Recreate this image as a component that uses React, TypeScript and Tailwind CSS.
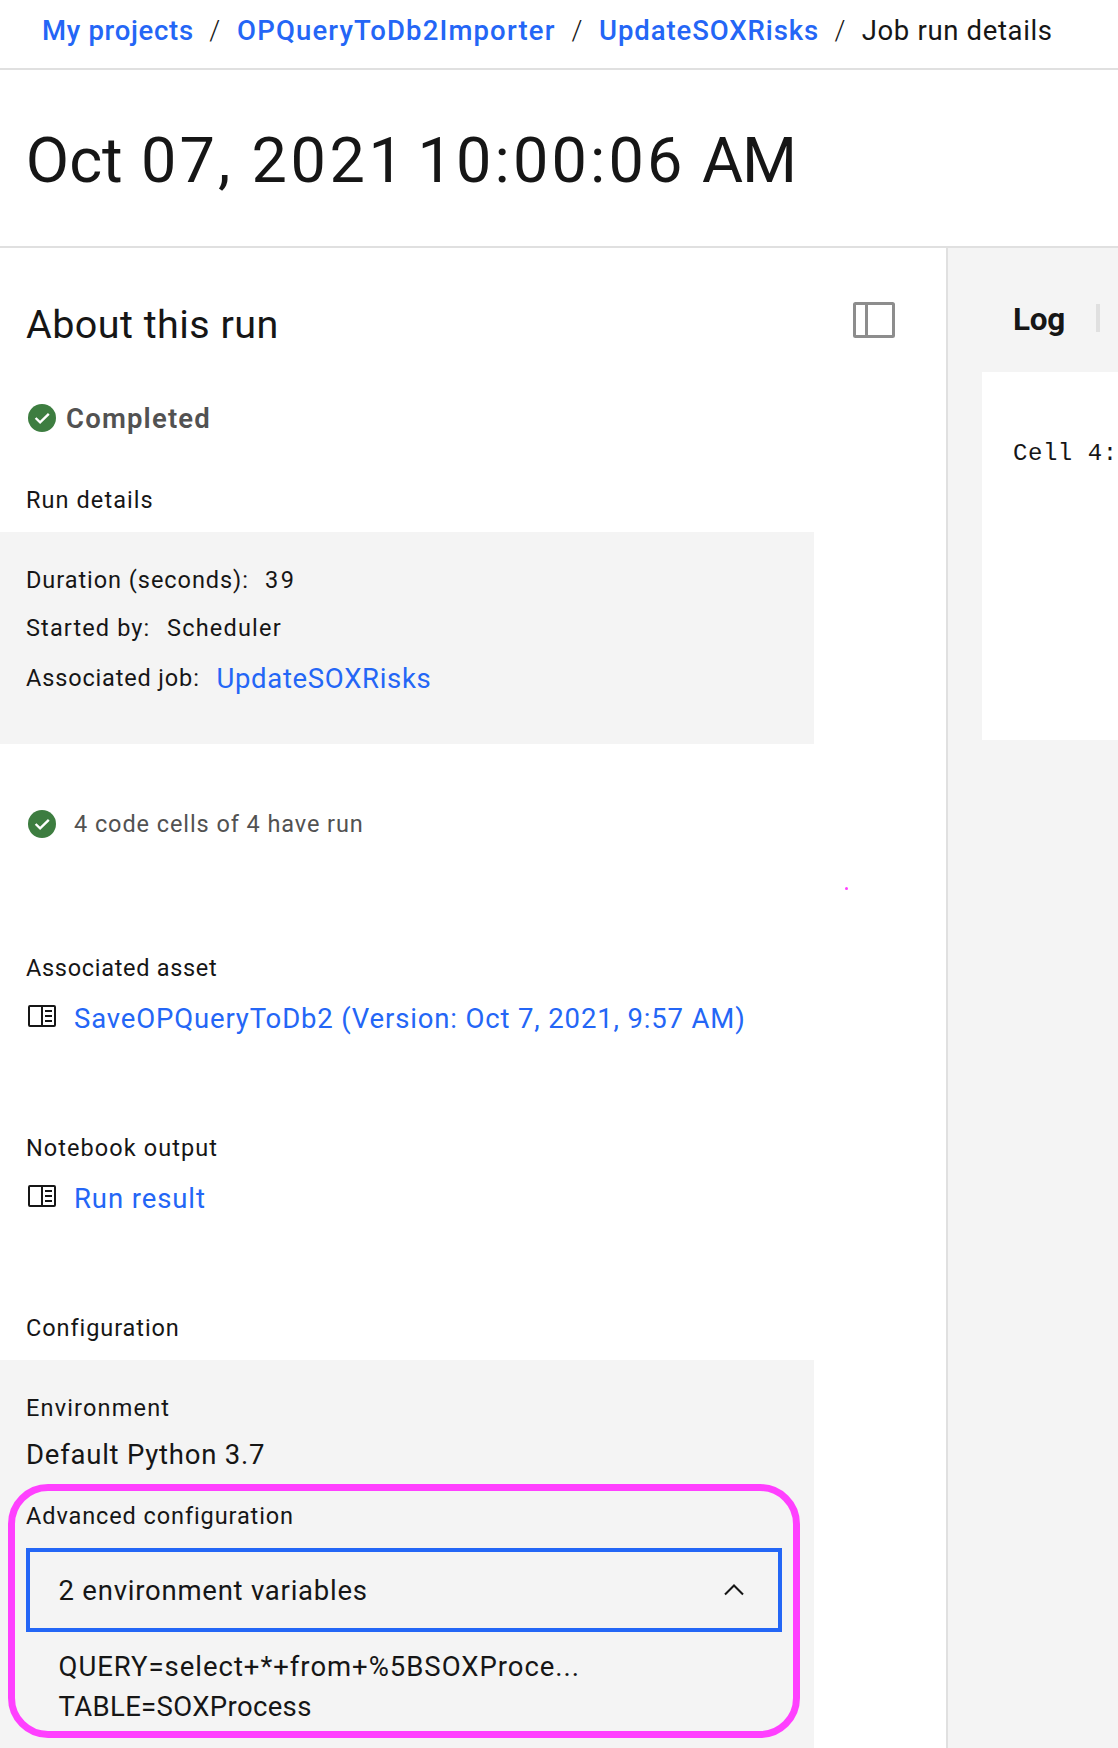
function CheckFilled({ className = '' }: { className?: string }) {
  return (
    <svg className={`h-7 w-7 shrink-0 ${className}`} viewBox="0 0 28 28" fill="none">
      <circle cx="14" cy="14" r="14" fill="#3d7d40" />
      <path d="M7.6 14 12.1 18.3 20.8 9.8" stroke="#fff" strokeWidth="2.4" />
    </svg>
  );
}

function NotebookIcon() {
  return (
    <svg className="mt-1 h-[22px] w-7 shrink-0" viewBox="0 0 28 22" fill="none" stroke="#161616" strokeWidth="2">
      <rect x="1" y="1" width="26" height="20" rx="1" />
      <path d="M14 1V21M17 6H24M17 11H24M17 16H24" />
    </svg>
  );
}

function PanelIcon() {
  return (
    <svg className="mt-[2px] h-9 w-[42px] shrink-0" viewBox="0 0 42 36" fill="none" stroke="#8d8d8d" strokeWidth="3">
      <rect x="1.5" y="1.5" width="39" height="33" rx="1" />
      <path d="M13.5 1.5V34.5" />
    </svg>
  );
}

const label = 'text-[23.5px] leading-8 whitespace-nowrap';
const body = 'text-[27.5px] leading-9 whitespace-nowrap';

export default function App() {
  return (
    <div className="flex h-[1748px] w-[1118px] flex-col overflow-hidden bg-white font-['Roboto',sans-serif] text-[#161616]">
      <nav className="h-[70px] shrink-0 border-b-2 border-[#e0e0e0] pt-[13px] pl-[42px]">
        <ol className={`flex ${body}`}>
          <li className="w-[167.3px] font-medium tracking-[0.7px] text-[#2466f6]">My projects</li>
          <li className="w-[27.8px] font-light">/</li>
          <li className="w-[334.5px] font-medium tracking-[1.16px] text-[#2466f6]">OPQueryToDb2Importer</li>
          <li className="w-[27.5px] font-light">/</li>
          <li className="w-[235.5px] font-medium tracking-[0.91px] text-[#2466f6]">UpdateSOXRisks</li>
          <li className="w-[27.1px] font-light">/</li>
          <li className="tracking-[0.65px]">Job run details</li>
        </ol>
      </nav>

      <header className="h-[178px] shrink-0 border-b-2 border-[#e0e0e0] pt-[51px] pl-[25.8px]">
        <h1 className="flex text-[63px] leading-[80px] whitespace-nowrap">
          <span className="w-[115.2px]">Oct</span>
          <span className="w-[110.5px] tracking-[3.1px]">07,</span>
          <span className="w-[166px] tracking-[3.6px]">2021</span>
          <span className="w-[284.5px] tracking-[3.15px]">10:00:06</span>
          <span className="tracking-[-1px]">AM</span>
        </h1>
      </header>

      <div className="flex min-h-0 flex-1">
        <main className="relative w-[948px] shrink-0 border-r-2 border-[#e0e0e0] pt-[52px]">
          <div className="flex h-12 justify-between pr-[51px] pl-[26px]">
            <h2 className="pt-px text-[39.5px] leading-[48px] tracking-[0.45px]">About this run</h2>
            <PanelIcon />
          </div>

          <div className={`mt-[53px] flex pl-7 font-semibold text-[#525252] ${body}`}>
            <CheckFilled className="mt-[3px]" />
            <span className="ml-[10px] tracking-[1.18px]">Completed</span>
          </div>

          <h3 className={`mt-[47px] pl-[26px] tracking-[1.07px] ${label}`}>Run details</h3>
          <dl className={`mt-4 h-[212px] w-[814px] bg-[#f4f4f4] pt-8 pl-[26px] ${label}`}>
            <div className="flex">
              <dt className="w-[239px] tracking-[0.95px]">Duration (seconds):</dt>
              <dd className="tracking-[2.6px]">39</dd>
            </div>
            <div className="mt-4 flex">
              <dt className="w-[141px] tracking-[1.12px]">Started by:</dt>
              <dd className="tracking-[1.2px]">Scheduler</dd>
            </div>
            <div className="mt-[18px] flex">
              <dt className="w-[190.5px] tracking-[0.85px]">Associated job:</dt>
              <dd className="text-[27.5px] leading-[34px] tracking-[0.67px] text-[#2466f6]">UpdateSOXRisks</dd>
            </div>
          </dl>

          <div className={`mt-16 flex items-center pl-7 text-[#525252] ${label}`}>
            <CheckFilled />
            <span className="ml-[18px] tracking-[0.92px]">4 code cells of 4 have run</span>
          </div>

          <h3 className={`mt-28 pl-[26px] tracking-[0.7px] ${label}`}>Associated asset</h3>
          <div className={`mt-[17px] flex pl-7 text-[#2466f6] ${body}`}>
            <NotebookIcon />
            <span className="ml-[18px] tracking-[0.85px]">SaveOPQueryToDb2 (Version: Oct 7, 2021, 9:57 AM)</span>
          </div>

          <h3 className={`mt-[95px] pl-[26px] tracking-[1.07px] ${label}`}>Notebook output</h3>
          <div className={`mt-[17px] flex pl-7 text-[#2466f6] ${body}`}>
            <NotebookIcon />
            <span className="ml-[18px] tracking-[0.9px]">Run result</span>
          </div>

          <h3 className={`mt-[95px] pl-[26px] tracking-[0.92px] ${label}`}>Configuration</h3>
          <section className="mt-4 h-[388px] w-[814px] bg-[#f4f4f4] pt-8 pl-[26px]">
            <p className={`tracking-[1.17px] ${label}`}>Environment</p>
            <p className={`mt-[13px] tracking-[0.77px] ${body}`}>Default Python 3.7</p>
            <p className={`mt-[27px] tracking-[0.9px] ${label}`}>Advanced configuration</p>
            <button className="mt-4 flex h-[84px] w-[756px] items-center justify-between border-4 border-[#2466f6] pr-[34px] pl-[28.5px]">
              <span className={`pt-[2px] tracking-[0.77px] ${body}`}>2 environment variables</span>
              <svg className="h-3 w-5" viewBox="0 0 20 12" fill="none" stroke="#161616" strokeWidth="2.1">
                <path d="M1 10.6 10 1.6 19 10.6" />
              </svg>
            </button>
            <ul className="mt-[15px] pl-[32.5px] text-[27.5px] leading-10 whitespace-nowrap">
              <li className="tracking-[0.97px]">QUERY=select+*+from+%5BSOXProce...</li>
              <li className="tracking-[0.35px]">TABLE=SOXProcess</li>
            </ul>
          </section>

          <div className="pointer-events-none absolute top-[1236px] left-2 h-[254px] w-[792px] rounded-[40px] border-[7.6px] border-[#ff40ff]" />
          <div className="pointer-events-none absolute top-[639px] left-[845px] h-[3px] w-[3px] rounded-full bg-[#ff40ff]" />
        </main>

        <aside className="min-w-0 flex-1 overflow-hidden bg-[#f4f4f4]">
          <div className="flex h-[124px] pt-14 pl-[65px]">
            <span className="w-[83px] text-[31.5px] leading-8 font-bold tracking-[-0.26px]">Log</span>
            <span className="h-7 w-1 bg-[#e0e0e0]" />
          </div>
          <pre className="ml-[34px] h-[368px] bg-white pt-[66px] pl-[31px] font-['Liberation_Mono',monospace] text-[24px] leading-8 tracking-[0.55px]">Cell 4:</pre>
        </aside>
      </div>
    </div>
  );
}
